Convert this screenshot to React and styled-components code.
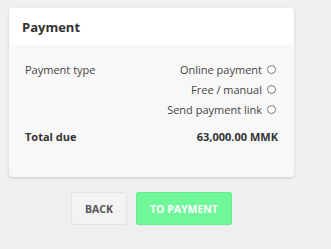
import React from "react";
import styled, { createGlobalStyle } from "styled-components";

const GlobalStyle = createGlobalStyle`
  body {
    margin: 0;
    background: #efefef;
    font-family: "Open Sans", "Liberation Sans", sans-serif;
    color: #333;
  }
`;

const Page = styled.div`
  width: 285px;
  padding: 8px 0 0 9px;
`;

const Card = styled.section`
  background: #f8f8f8;
  border-radius: 4px;
  box-shadow: 0 1px 3px rgba(0, 0, 0, 0.14);
  overflow: hidden;
`;

const Header = styled.header`
  height: 37px;
  display: flex;
  align-items: center;
  padding-left: 13px;
  background: #fff;
  font-size: 13px;
  font-weight: 700;
  color: #333;
`;

const Body = styled.div`
  padding: 17px 18px 33px 16px;
`;

const Row = styled.div`
  display: flex;
  justify-content: space-between;
  align-items: flex-start;
  margin-bottom: ${(p) => p.$gap || 0}px;
  font-size: 11px;
  font-weight: ${(p) => (p.$bold ? 700 : 400)};
  color: ${(p) => (p.$bold ? "#333" : "#444")};
`;

const Options = styled.div`
  display: flex;
  flex-direction: column;
  align-items: flex-end;
  gap: 5px;
`;

const Option = styled.label`
  display: flex;
  align-items: center;
  gap: 5px;
  height: 15px;
  line-height: 15px;
`;

const Radio = styled.span`
  width: 7px;
  height: 7px;
  border: 1px solid #777;
  border-radius: 50%;
  background: #fff;
`;

const Amount = styled.span`
  margin-right: -2px;
`;

const Actions = styled.div`
  display: flex;
  justify-content: center;
  gap: 9px;
  padding-top: 15px;
`;

const Button = styled.button`
  height: 33px;
  padding: 0 13px;
  border-radius: 2px;
  border: 1px solid ${(p) => (p.$primary ? "#62ee8c" : "#e2e2e2")};
  background: ${(p) => (p.$primary ? "#70f79a" : "#f3f3f3")};
  color: ${(p) => (p.$primary ? "#fff" : "#555")};
  font-family: inherit;
  font-size: 10.5px;
  font-weight: 700;
  text-transform: uppercase;
`;

const options = ["Online payment", "Free / manual", "Send payment link"];

export default function App() {
  return (
    <Page>
      <GlobalStyle />
      <Card>
        <Header>Payment</Header>
        <Body>
          <Row $gap={12}>
            <span>Payment type</span>
            <Options>
              {options.map((o) => (
                <Option key={o}>
                  {o}
                  <Radio />
                </Option>
              ))}
            </Options>
          </Row>
          <Row $bold>
            <span>Total due</span>
            <Amount>63,000.00 MMK</Amount>
          </Row>
        </Body>
      </Card>
      <Actions>
        <Button>Back</Button>
        <Button $primary>To payment</Button>
      </Actions>
    </Page>
  );
}
